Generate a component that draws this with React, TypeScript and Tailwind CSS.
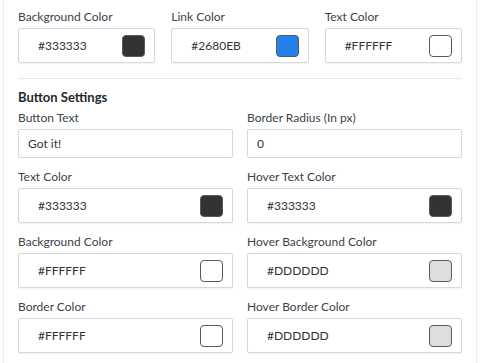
import React from "react";

type ColorField = { label: string; value: string; swatch: string };

const Swatch = ({ color }: { color: string }) => (
  <span
    className="block w-[23px] h-[22px] rounded-[4px] border border-[#5a5a5a] shrink-0"
    style={{ backgroundColor: color }}
  />
);

const ColorInput = ({ label, value, swatch }: ColorField) => (
  <div className="flex flex-col">
    <label className="text-[12px] leading-[14px] text-[#3c434a] mb-[4px]">{label}</label>
    <div className="h-[35px] flex items-center justify-between pl-[19px] pr-[9px] bg-white border border-[#d5d8dc] rounded-[2px] shadow-[0_1px_2px_rgba(0,0,0,0.06)]">
      <span className="text-[12px] text-[#333]">{value}</span>
      <Swatch color={swatch} />
    </div>
  </div>
);

const TextInput = ({ label, value }: { label: string; value: string }) => (
  <div className="flex flex-col">
    <label className="text-[12px] leading-[14px] text-[#3c434a] mb-[4px]">{label}</label>
    <div className="h-[29px] flex items-center px-[9px] bg-white border border-[#d5d8dc] rounded-[2px]">
      <span className="text-[12px] text-[#333]">{value}</span>
    </div>
  </div>
);

const topColors: ColorField[] = [
  { label: "Background Color", value: "#333333", swatch: "#333333" },
  { label: "Link Color", value: "#2680EB", swatch: "#2680EB" },
  { label: "Text Color", value: "#FFFFFF", swatch: "#FFFFFF" },
];

const buttonColors: ColorField[] = [
  { label: "Text Color", value: "#333333", swatch: "#333333" },
  { label: "Hover Text Color", value: "#333333", swatch: "#333333" },
  { label: "Background Color", value: "#FFFFFF", swatch: "#FFFFFF" },
  { label: "Hover Background Color", value: "#DDDDDD", swatch: "#DDDDDD" },
  { label: "Border Color", value: "#FFFFFF", swatch: "#FFFFFF" },
  { label: "Hover Border Color", value: "#DDDDDD", swatch: "#DDDDDD" },
];

export default function App() {
  return (
    <div
      className="w-[480px] h-[363px] bg-white overflow-hidden px-[3px]"
      style={{ fontFamily: '"Segoe UI", Lato, "Noto Sans", sans-serif' }}
    >
      <div className="h-full border-x border-[#ececec] px-[14px] pt-[10px]">
        <div className="grid grid-cols-3 gap-x-[16px]">
          {topColors.map((f) => (
            <ColorInput key={f.label} {...f} />
          ))}
        </div>

        <div className="h-px bg-[#e4e6e8] mt-[15px] mb-[9px]" />

        <h3 className="text-[13px] font-bold text-[#23282d] leading-[18px] mb-[5px]">Button Settings</h3>

        <div className="grid grid-cols-2 gap-x-[14px] gap-y-[12px]">
          <TextInput label="Button Text" value="Got it!" />
          <TextInput label="Border Radius (In px)" value="0" />
          {buttonColors.map((f, i) => (
            <ColorInput key={i} {...f} />
          ))}
        </div>
      </div>
    </div>
  );
}
